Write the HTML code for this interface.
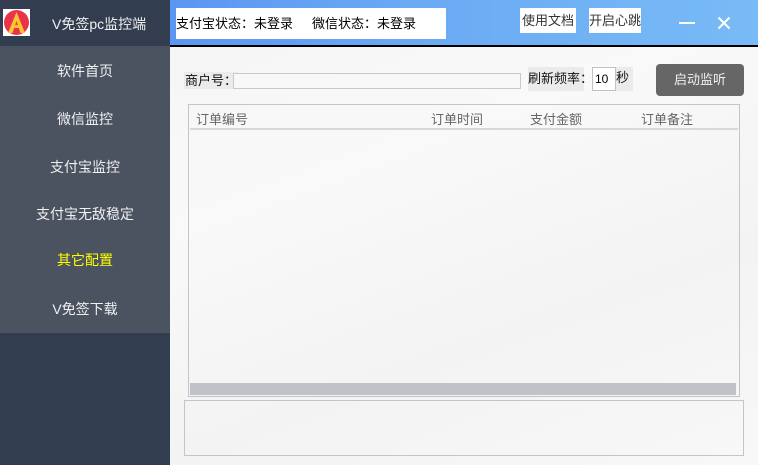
<!DOCTYPE html>
<html><head><meta charset="utf-8"><style>
*{margin:0;padding:0;box-sizing:border-box}
body{width:758px;height:465px;overflow:hidden;position:relative;font-family:"Liberation Sans","Noto Sans CJK SC",sans-serif;font-size:13px;background:linear-gradient(160deg,#f4f4f4 0%,#f9f9f9 40%,#f3f3f3 70%,#f8f8f8 100%)}
.abs{position:absolute;white-space:nowrap}
.side{left:0;top:0;width:170px;height:465px;background:#323e50}
.menu{left:0;top:46px;width:170px;height:287px;background:#4b5260}
.mi{position:absolute;left:0;width:170px;text-align:center;color:#f0f0f0;font-size:14px;line-height:20px}
.top{left:170px;top:0;width:588px;height:45px;background:linear-gradient(90deg,#5b96f2 0%,#6aa9f4 40%,#78bbf6 100%)}
.line{left:170px;top:45px;width:588px;height:2px;background:#000}
.btn{background:#fff;color:#333;font-size:13px;line-height:25px;text-align:center}
.lbl{background:#ebebeb;color:#111;font-size:13px}
</style></head><body>
<div class="abs side"></div>
<div class="abs menu"></div>
<div class="abs" style="left:3px;top:9px;width:27px;height:27px;background:#fff">
<svg width="27" height="27" viewBox="0 0 27 27"><circle cx="13.5" cy="13.5" r="12.5" fill="#e8344a"/><path d="M13.5 3 L22 24 L17.5 24 L13.5 12 L9.5 24 L5 24 Z" fill="#f7c531"/><rect x="9" y="16" width="9" height="3" fill="#f7c531"/></svg>
</div>
<div class="abs" style="left:52px;top:14px;color:#f0f0f0;font-size:14px">V免签pc监控端</div>
<div class="mi" style="top:61px">软件首页</div>
<div class="mi" style="top:109px">微信监控</div>
<div class="mi" style="top:157px">支付宝监控</div>
<div class="mi" style="top:204px">支付宝无敌稳定</div>
<div class="mi" style="top:250px;color:#ffff00">其它配置</div>
<div class="mi" style="top:299px">V免签下载</div>

<div class="abs top"></div>
<div class="abs line"></div>
<div class="abs" style="left:176px;top:8px;width:270px;height:31px;background:#fff"></div>
<div class="abs" style="left:176px;top:8px;line-height:31px;color:#000">支付宝状态：未登录</div>
<div class="abs" style="left:312px;top:8px;line-height:31px;color:#000">微信状态：未登录</div>
<div class="abs btn" style="left:520px;top:8px;width:56px;height:25px">使用文档</div>
<div class="abs btn" style="left:589px;top:8px;width:52px;height:25px">开启心跳</div>
<div class="abs" style="left:679px;top:22px;width:16px;height:2px;background:#fff"></div>
<svg class="abs" style="left:717px;top:16px" width="14" height="14" viewBox="0 0 14 14"><path d="M1.5 1.5L12.5 12.5M12.5 1.5L1.5 12.5" stroke="#fff" stroke-width="2"/></svg>

<div class="abs lbl" style="left:184px;top:72px;height:17px;line-height:17px;padding:0 1px">商户号：</div>
<div class="abs" style="left:233px;top:73px;width:288px;height:16px;border:1px solid #c8c8d0;background:#f8f8f8"></div>
<div class="abs lbl" style="left:528px;top:67px;width:56px;height:24px;line-height:24px">刷新频率：</div>
<div class="abs" style="left:592px;top:67px;width:24px;height:24px;border:1px solid #c0c0c8;background:#fff;line-height:22px;font-size:12px;padding-left:2px">10</div>
<div class="abs lbl" style="left:616px;top:67px;width:17px;height:24px;line-height:22px">秒</div>
<div class="abs" style="left:656px;top:64px;width:88px;height:32px;background:#666;border-radius:4px;color:#f0f0f0;text-align:center;line-height:32px;font-size:13px">启动监听</div>

<div class="abs" style="left:188px;top:104px;width:552px;height:293px;border:1px solid #c4c4cc"></div>
<div class="abs" style="left:196px;top:109px;color:#666">订单编号</div>
<div class="abs" style="left:431px;top:109px;color:#666">订单时间</div>
<div class="abs" style="left:530px;top:109px;color:#666">支付金额</div>
<div class="abs" style="left:641px;top:109px;color:#666">订单备注</div>
<div class="abs" style="left:190px;top:128px;width:548px;height:2px;background:#d8d8d8"></div>
<div class="abs" style="left:190px;top:383px;width:546px;height:12px;background:#c0c1c9"></div>
<div class="abs" style="left:184px;top:400px;width:560px;height:56px;border:1px solid #c4c4cc"></div>
</body></html>
